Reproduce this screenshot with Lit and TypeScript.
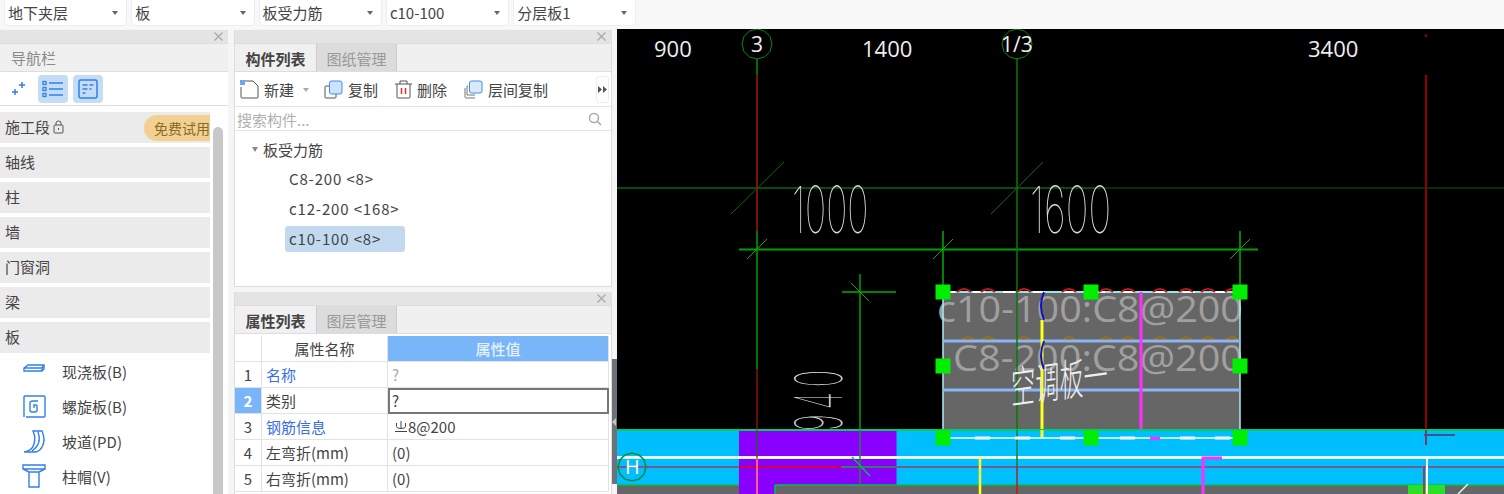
import { LitElement, html, css, svg } from 'lit';
import { customElement } from 'lit/decorators.js';
import { classMap } from 'lit/directives/class-map.js';

const selects = ['地下夹层', '板', '板受力筋', 'c10-100', '分层板1'];
const navRows = ['轴线', '柱', '墙', '门窗洞', '梁', '板'];

const navIcons = {
  slab: svg`<path d="M2 9l4-3h16v4l-2 2H2z M2 9h18v3 M20 9l2-3"/>`,
  spiral: svg`<path d="M2 23V3q0-1 1-1h19q1 0 1 1v19q0 1-1 1H4 M16 7h-5q-3 0-3 2v7q0 2 2 2h3q2 0 2-2v-4q0-1-1-1h-2v3"/>`,
  ramp: svg`<path d="M2 23q8-1 10-8 2-7-1-13h9q4 9 0 16-2 4-6 5z M16 3q3 8-1 14-2 3-5 5"/>`,
  cap: svg`<path d="M1 1h22v4l-6 3v15H7V8L1 5z M1 5h22 M7 8h10"/>`,
};

const subItems = [
  { icon: navIcons.slab, label: '现浇板(B)' },
  { icon: navIcons.spiral, label: '螺旋板(B)' },
  { icon: navIcons.ramp, label: '坡道(PD)' },
  { icon: navIcons.cap, label: '柱帽(V)' },
];

const treeItems = [
  { label: 'C8-200 <8>', selected: false },
  { label: 'c12-200 <168>', selected: false },
  { label: 'c10-100 <8>', selected: true },
];

const propRows = [
  { name: '名称', value: '?', link: true, muted: true },
  { name: '类别', value: '?', active: true },
  { name: '钢筋信息', value: '8@200', link: true, rebar: true },
  { name: '左弯折(mm)', value: '(0)' },
  { name: '右弯折(mm)', value: '(0)' },
];

// regular polygon, the CAD axis bubbles are not true circles
const ring = (cx: number, cy: number, r: number, n = 12) =>
  Array.from({ length: n }, (_, i) => {
    const a = (i * 2 * Math.PI) / n;
    return `${(cx + r * Math.cos(a)).toFixed(1)},${(cy + r * Math.sin(a)).toFixed(1)}`;
  }).join(' ');

const handles = [
  [943, 292], [1091, 292], [1240, 292], [943, 366], [1240, 366], [943, 438], [1091, 438], [1240, 438],
];
const redArcs = [964, 988, 1024, 1069, 1106, 1128, 1160, 1186, 1208, 1232];
const brownArcs = [968, 988, 1024, 1069, 1106, 1128, 1160, 1186, 1208, 1232];
const whiteDashes = [975, 1015, 1060, 1120, 1180, 1215];

const dimTick = (x: number, y: number, r = 10) =>
  svg`<line x1=${x - r} y1=${y + r} x2=${x + r} y2=${y - r} stroke="#00b000" />`;

const close = html`<svg class="close" width="9" height="9" viewBox="0 0 9 9"><path d="M.5 .5l8 8M8.500 .5l-8 8" /></svg>`;

@customElement('app-root')
export class AppRoot extends LitElement {
  static styles = css`
    :host {
      display: block;
      width: 1504px;
      height: 494px;
      overflow: hidden;
      background: #f5f5f5;
      font-family: 'Noto Sans CJK SC', 'Open Sans', sans-serif;
      font-size: 15px;
      color: #444;
    }
    .topbar {
      display: flex;
      gap: 4px;
      height: 29px;
      padding-left: 4px;
      box-sizing: border-box;
      background: #f8f8f8;
    }
    .select {
      width: 123.3px;
      height: 26px;
      padding: 0 8px 0 3px;
      box-sizing: border-box;
      display: flex;
      align-items: center;
      justify-content: space-between;
      background: #fff;
      border: 1px solid #eee;
      border-top: none;
      border-radius: 0 0 4px 4px;
      line-height: 26px;
    }
    .caret {
      width: 0;
      height: 0;
      border: 3px solid transparent;
      border-top: 4px solid #666;
      border-bottom: none;
    }
    .main {
      display: flex;
      height: 465px;
    }
    .nav {
      width: 228px;
      margin-top: 1px;
      background: #fff;
      overflow: hidden;
      flex: none;
    }
    .titlebar {
      height: 14px;
      box-sizing: border-box;
      background: #e4e4e4;
      display: flex;
      justify-content: flex-end;
      align-items: center;
      padding-right: 5px;
      border-bottom: 1px solid #ddd;
    }
    .close {
      fill: none;
      stroke: #a8a8a8;
      stroke-width: 1.3;
    }
    .nav-head {
      height: 27px;
      line-height: 27px;
      padding-left: 11px;
      background: #f0f0f0;
      color: #8a8a8a;
      border-bottom: 1px solid #ddd;
    }
    .nav-tools {
      height: 33px;
      display: flex;
      align-items: center;
      padding-left: 10px;
      border-bottom: 1px solid #ddd;
    }
    .nav-tools svg {
      fill: none;
      stroke: #2f80ed;
      stroke-width: 1.3;
    }
    .tool-on {
      width: 30px;
      height: 28px;
      background: #c4dcf6;
      border-radius: 4px;
      display: flex;
      align-items: center;
      justify-content: center;
      margin-right: 5px;
    }
    .sparkle {
      width: 16px;
      margin-right: 12px;
    }
    .nav-body {
      display: flex;
    }
    .nav-list {
      width: 210px;
      padding-top: 6px;
      display: flex;
      flex-direction: column;
      gap: 4px;
    }
    .nav-row {
      height: 31px;
      box-sizing: border-box;
      padding: 0 0 2px 5px;
      background: #ebebeb;
      display: flex;
      align-items: center;
      flex: none;
    }
    .lock {
      margin-left: 3px;
      fill: none;
      stroke: #555;
    }
    .pill {
      margin: 2px 0 0 auto;
      width: 56px;
      height: 26px;
      line-height: 26px;
      padding-left: 10px;
      background: #f3d08f;
      border-radius: 13px 0 0 13px;
      color: #8a6a2c;
      font-size: 14px;
      white-space: nowrap;
      overflow: hidden;
    }
    .subs {
      margin-top: -3px;
    }
    .sub {
      height: 35px;
      display: flex;
      align-items: center;
      padding-left: 22px;
      gap: 15px;
    }
    .sub svg {
      fill: none;
      stroke: #2f80ed;
      stroke-width: 1.4;
      flex: none;
    }
    .rail {
      margin: 21px 0 0 3px;
      width: 10px;
      height: 400px;
      background: #c8c8c8;
      border-radius: 5px 5px 0 0;
    }
    .middle {
      width: 378px;
      margin: 1px 0 0 6px;
      flex: none;
      display: flex;
      flex-direction: column;
      gap: 5px;
    }
    .panel {
      background: #fff;
      border: solid #ddd;
      border-width: 0 1px 1px;
      box-sizing: border-box;
    }
    .panel.top {
      height: 257px;
    }
    .panel.bottom {
      flex: 1;
      border-bottom: none;
      overflow: hidden;
    }
    .tabs {
      display: flex;
      height: 28px;
      box-sizing: border-box;
      background: #f0f0f0;
      border-bottom: 1px solid #ddd;
    }
    .tab {
      width: 81px;
      line-height: 29px;
      text-align: center;
      background: #dcdcdc;
      color: #999;
      border-left: 1px solid #ccc;
      border-right: 1px solid #ccc;
      box-sizing: border-box;
    }
    .tab.on {
      background: #f0f0f0;
      color: #444;
      font-weight: 700;
      border: none;
    }
    .toolbar {
      height: 35px;
      box-sizing: border-box;
      display: flex;
      align-items: center;
      padding: 1px 0 0 5px;
      border-bottom: 1px solid #e2e2e2;
    }
    .action {
      display: flex;
      align-items: center;
      gap: 5px;
      margin-right: 17px;
    }
    .action svg {
      flex: none;
    }
    .mini-caret {
      margin: 0 -2px 0 4px;
      width: 0;
      height: 0;
      border: 3px solid transparent;
      border-top: 4px solid #aaa;
      border-bottom: none;
    }
    .more {
      margin-left: auto;
      margin-right: 2px;
      width: 13px;
      height: 27px;
      border: 1px solid #eee;
      border-radius: 3px;
      box-sizing: border-box;
      display: flex;
      align-items: center;
      justify-content: center;
      color: #555;
    }
    .more svg {
      fill: #555;
    }
    .search {
      height: 24px;
      box-sizing: border-box;
      display: flex;
      align-items: center;
      justify-content: space-between;
      padding: 1px 9px 0 2px;
      color: #b0b0b0;
      border-bottom: 1px solid #e2e2e2;
    }
    .search svg {
      fill: none;
      stroke: #aaa;
      stroke-width: 1.5;
    }
    .tree {
      padding-top: 5px;
    }
    .tree-root {
      height: 26px;
      margin-bottom: 1px;
      display: flex;
      align-items: center;
      padding-left: 17px;
      gap: 5px;
    }
    .tree-caret {
      width: 0;
      height: 0;
      border: 3.5px solid transparent;
      border-top: 5px solid #888;
      border-bottom: none;
    }
    .tree-item {
      width: 120px;
      height: 26px;
      line-height: 26px;
      margin: 4px 0 0 50px;
      padding-left: 4px;
      box-sizing: border-box;
      border-radius: 3px;
      letter-spacing: 0.85px;
      white-space: nowrap;
    }
    .tree-item.sel {
      background: #c3d9f0;
    }
    .table {
      display: grid;
      grid-template-columns: 27px 126px 221px;
      grid-auto-rows: 26px;
      margin-top: 2px;
      line-height: 26px;
    }
    .cell {
      border: solid #e2e2e2;
      border-width: 0 1px 1px 0;
      box-sizing: border-box;
      padding-left: 4px;
      white-space: nowrap;
    }
    .cell.idx {
      text-align: center;
      padding-left: 0;
    }
    .cell.idx.on {
      background: #79b6f9;
      color: #fff;
      font-weight: 700;
    }
    .cell.head {
      text-align: center;
      padding-left: 0;
    }
    .cell.head.val {
      background: #79b6f9;
      color: #e6f1fd;
      font-weight: 500;
    }
    .link {
      color: #3a6ee8;
    }
    .muted {
      color: #aaa;
    }
    .editing {
      border: 2px solid #777;
      line-height: 22px;
      padding-left: 2px;
    }
    .rebar {
      fill: none;
      stroke: #444;
      margin: 0 1px 5px 3px;
      vertical-align: middle;
    }
    .splitter {
      width: 5px;
      height: 125px;
      margin-top: 330px;
      background: #6d7278;
      flex: none;
      display: flex;
      align-items: center;
    }
    .splitter svg {
      fill: #c4c4c4;
    }
    .canvas {
      display: block;
      flex: none;
      background: #000;
    }
    .canvas text {
      font-family: 'Open Sans', 'Liberation Sans', sans-serif;
    }
    .canvas .thin {
      font-family: 'Inter', 'Liberation Sans', sans-serif;
      font-weight: 100;
    }
    .canvas .cjk {
      font-family: 'Noto Sans CJK SC', sans-serif;
      font-weight: 300;
    }
  `;

  private renderCanvas() {
    return html`<svg class="canvas" width="887" height="465" viewBox="617 29 887 465" fill="none">
      <!-- grid and dimensions on black -->
      <line x1="617" y1="188" x2="1100" y2="188" stroke="#0a660a" stroke-width="1.5" />
      <line x1="1100" y1="188" x2="1504" y2="188" stroke="#063f06" stroke-width="1.5" />
      <line x1="757" y1="59" x2="757" y2="75" stroke="#0a8a0a" stroke-width="1.5" />
      <line x1="757" y1="75" x2="757" y2="231" stroke="#a01a00" stroke-width="1.5" />
      <line x1="757" y1="231" x2="757" y2="369" stroke="#00a000" stroke-width="1.5" />
      <line x1="757" y1="369" x2="757" y2="430" stroke="#8a1000" stroke-width="1.5" />
      <line x1="1426" y1="34" x2="1426" y2="37" stroke="#8a0000" stroke-width="2" />
      <line x1="1426" y1="75" x2="1426" y2="430" stroke="#900000" stroke-width="2" />
      <polygon points=${ring(757, 44, 15)} stroke="#0a8a0a" />
      <polygon points=${ring(1017, 44, 15)} stroke="#0a8a0a" />
      <line x1="731" y1="214" x2="784" y2="162" stroke="#0a660a" />
      <line x1="991" y1="214" x2="1043" y2="162" stroke="#0a660a" />

      <g fill="#eee" font-size="22">
        <text x="654" y="57">900</text>
        <text x="862" y="57">1400</text>
        <text x="1308" y="57">3400</text>
        <text x="751" y="52" font-size="21">3</text>
        <text x="1001" y="52" font-size="21">1/3</text>
      </g>

      <g fill="#ddd" font-size="65">
        <text class="thin" transform="translate(792 233) scale(.55 1)">1000</text>
        <text class="thin" transform="translate(1030 233) scale(.59 1)">1600</text>
        <text class="thin" transform="translate(842 431) rotate(-90) scale(.45 1)" letter-spacing="11">940</text>
      </g>

      <line x1="739" y1="249.500" x2="1258" y2="249.500" stroke="#00a000" stroke-width="2" />
      <line x1="943" y1="231" x2="943" y2="292" stroke="#00b000" stroke-width="1.5" />
      <line x1="1240" y1="231" x2="1240" y2="292" stroke="#00b000" stroke-width="1.5" />
      ${dimTick(757, 249)} ${dimTick(943, 249)} ${dimTick(1240, 249)}
      <line x1="842" y1="292" x2="896" y2="292" stroke="#00b000" stroke-width="1.5" />
      <line x1="860" y1="274" x2="860" y2="485" stroke="#00a000" stroke-width="1.5" />
      <line x1="851" y1="283" x2="869" y2="301" stroke="#00b000" />

      <!-- slab in plan -->
      <rect x="943" y="292" width="297" height="138" fill="#666" />
      <text x="937" y="322" font-size="36" fill="#a0a0a0" textLength="306" lengthAdjust="spacingAndGlyphs">c10-100:C8@200</text>
      <text x="953" y="371" font-size="36" fill="#a0a0a0" textLength="290" lengthAdjust="spacingAndGlyphs">C8-200:C8@200</text>
      <line x1="943" y1="292" x2="1240" y2="292" stroke="#8fe8f0" stroke-width="2" />
      <line x1="943" y1="292" x2="1240" y2="292" stroke="#fff" stroke-width="2" stroke-dasharray="12 18" />
      <line x1="943" y1="292" x2="943" y2="430" stroke="#a8f0f4" stroke-width="1.5" />
      <line x1="1240" y1="292" x2="1240" y2="430" stroke="#a8f0f4" stroke-width="1.5" />
      ${redArcs.map((x) => svg`<path d="M${x - 7} 292q7-6 14 0" stroke="#c01818" stroke-width="2" />`)}
      ${brownArcs.map((x) => svg`<path d="M${x - 7} 341q7-8 14 0" stroke="#9a7010" stroke-width="2" />`)}
      <line x1="943" y1="341" x2="1240" y2="341" stroke="#8ab4f8" stroke-width="3" />
      <line x1="943" y1="390" x2="1240" y2="390" stroke="#8ab4f8" stroke-width="3" />
      <line x1="1042" y1="320" x2="1042" y2="438" stroke="#ffff20" stroke-width="3" />
      <line x1="1141" y1="292" x2="1141" y2="438" stroke="#ff30ff" stroke-width="3" />
      <path d="M1044 292q-6 14 0 28 M1044 341q-6 15 0 28" stroke="#1010c0" stroke-width="2" />
      <line x1="1017" y1="58" x2="1017" y2="430" stroke="#0a7a0a" stroke-width="1.5" />
      <text class="cjk" transform="translate(1011 404) skewY(-8) scale(.55 1)" font-size="44" fill="#eee">空调板一</text>

      <!-- beam band along the bottom -->
      <rect x="617" y="430" width="887" height="55" fill="#00bfff" />
      <rect x="739" y="430" width="157.500" height="55" fill="#8a00ff" />
      <rect x="617" y="485" width="887" height="9" fill="#666" />
      <rect x="739" y="485" width="36" height="9" fill="#8a00ff" />
      <line x1="617" y1="430" x2="1504" y2="430" stroke="#00d060" stroke-width="2" />
      <line x1="617" y1="485" x2="739" y2="485" stroke="#00c050" stroke-width="1.5" />
      <line x1="775" y1="485" x2="1504" y2="485" stroke="#00c050" stroke-width="1.5" />
      <line x1="775" y1="485" x2="775" y2="494" stroke="#00c050" stroke-width="1.5" />
      <line x1="617" y1="457.500" x2="1504" y2="457.500" stroke="#d8f8ff" stroke-width="3" />
      <line x1="617" y1="457.500" x2="1504" y2="457.500" stroke="#fff" />
      <line x1="617" y1="467" x2="1504" y2="467" stroke="#7a5a8a" stroke-width="2" />
      <line x1="739" y1="467" x2="841" y2="467" stroke="#d0003c" stroke-width="2" />
      <line x1="841" y1="467" x2="896" y2="467" stroke="#3c7a60" stroke-width="2" />
      <line x1="757" y1="430" x2="757" y2="457" stroke="#2a5a2a" stroke-width="1.5" />
      <line x1="757" y1="457" x2="757" y2="494" stroke="#ff5a8a" stroke-width="2" />
      <line x1="860" y1="430" x2="860" y2="485" stroke="#1f8a3a" stroke-width="1.5" />
      <line x1="852" y1="457" x2="870" y2="476" stroke="#00c040" stroke-width="1.5" />
      <line x1="1017" y1="430" x2="1017" y2="467" stroke="#0a7a3a" stroke-width="1.5" />
      <line x1="1017" y1="467" x2="1017" y2="494" stroke="#b02020" stroke-width="1.5" />
      <line x1="980" y1="457" x2="980" y2="494" stroke="#ffff20" stroke-width="2.500" />
      <path d="M1222 458h-19v36" stroke="#ff30ff" stroke-width="3" />
      <line x1="1042" y1="430" x2="1042" y2="438" stroke="#ffff20" stroke-width="3" />
      <line x1="1426" y1="430" x2="1426" y2="445" stroke="#7a3a60" stroke-width="2" />
      <line x1="1424" y1="435" x2="1455" y2="435" stroke="#3a5a80" stroke-width="2" />

      <rect x="1408" y="485" width="37" height="9" fill="#2ade2a" />
      <line x1="1424" y1="467" x2="1424" y2="494" stroke="#a04040" stroke-width="2" />
      <line x1="1427" y1="457" x2="1427" y2="494" stroke="#fff" stroke-width="2" />
      <line x1="1458" y1="494" x2="1468" y2="484" stroke="#eee" stroke-width="1.5" />

      <line x1="950" y1="438" x2="1233" y2="438" stroke="#bff4ff" stroke-width="2" />
      ${whiteDashes.map((x) => svg`<line x1=${x} y1="438" x2=${x + 15} y2="438" stroke="#fff" stroke-width="3" />`)}
      <line x1="1150" y1="438.500" x2="1160" y2="438.500" stroke="#ff30ff" stroke-width="3" />
      ${handles.map(([x, y]) => svg`<rect x=${x - 7.5} y=${y - 7.5} width="15" height="15" fill="#00ee00" />`)}

      <polygon points=${ring(632, 467, 14)} stroke="#0a8a3a" stroke-width="1.5" />
      <text x="625" y="474" font-size="20" fill="#fff">H</text>
    </svg>`;
  }

  private renderPropValue(r: (typeof propRows)[number]) {
    if (r.active) return html`<div class="cell editing">${r.value}</div>`;
    return html`<div class=${classMap({ cell: true, muted: !!r.muted })}>
      ${r.rebar
        ? html`<svg class="rebar" width="12" height="11" viewBox="0 0 12 11"><path d="M1.500 2v3.500q0 2 4.500 2t4.500-2V2M6 0v8M0 10.500h12"/></svg>`
        : ''}${r.value}
    </div>`;
  }

  render() {
    return html`
      <div class="topbar">
        ${selects.map((s) => html`<div class="select"><span>${s}</span><span class="caret"></span></div>`)}
      </div>
      <div class="main">
        <div class="nav">
          <div class="titlebar">${close}</div>
          <div class="nav-head">导航栏</div>
          <div class="nav-tools">
            <svg class="sparkle" width="16" height="16" viewBox="0 0 16 16">
              <path d="M9 4h6M12 1v6M2 11h6M5 8v6" stroke-width="1.500" />
            </svg>
            <div class="tool-on">
              <svg width="22" height="18" viewBox="0 0 22 18">
                <rect x="1" y="1.500" width="3" height="3" /><rect x="1" y="7.500" width="3" height="3" /><rect x="1" y="13.500" width="3" height="3" />
                <path d="M7 3h14M7 9h14M7 15h14" stroke-width="1.500" />
              </svg>
            </div>
            <div class="tool-on">
              <svg width="20" height="20" viewBox="0 0 20 20">
                <rect x="1" y="1" width="18" height="18" rx="2" stroke-width="1.500" />
                <path d="M4.500 6h5M11.500 6h4M4.500 10h5M11.500 10h2M4.500 14h3" />
              </svg>
            </div>
          </div>
          <div class="nav-body">
            <div class="nav-list">
              <div class="nav-row">
                施工段
                <svg class="lock" width="11" height="14" viewBox="0 0 11 14">
                  <rect x="1" y="5" width="9" height="8" rx="1" /><path d="M3 5V3q0-2 2.500-2T8 3v2M5.500 8v2" />
                </svg>
                <span class="pill">免费试用</span>
              </div>
              ${navRows.map((r) => html`<div class="nav-row">${r}</div>`)}
              <div class="subs">
                ${subItems.map(
                  (s) => html`<div class="sub">
                    <svg width="25" height="25" viewBox="0 0 25 25">${s.icon}</svg>
                    <span>${s.label}</span>
                  </div>`
                )}
              </div>
            </div>
            <div class="rail"></div>
          </div>
        </div>

        <div class="middle">
          <div class="panel top">
            <div class="titlebar">${close}</div>
            <div class="tabs">
              <div class="tab on">构件列表</div>
              <div class="tab">图纸管理</div>
            </div>
            <div class="toolbar">
              <div class="action">
                <svg width="19" height="19" viewBox="0 0 19 19" fill="none">
                  <path d="M1 7v10q0 1 1 1h15q1 0 1-1V6l-5-5H5" stroke="#555" />
                  <rect x="0" y="0" width="5" height="5" fill="#6ea6ef" />
                </svg>
                新建<span class="mini-caret"></span>
              </div>
              <div class="action">
                <svg width="19" height="19" viewBox="0 0 19 19" fill="none">
                  <path d="M5 6H2q-1 0-1 1v10q0 1 1 1h9q1 0 1-1v-3" stroke="#555" />
                  <rect x="5.500" y="1" width="12.500" height="13" rx="2" fill="#cfe2fb" stroke="#3f8cf0" />
                </svg>
                复制
              </div>
              <div class="action">
                <svg width="17" height="19" viewBox="0 0 17 19" fill="none">
                  <path d="M0 4h17M5 4V1h7v3M2 4v13q0 1 1 1h11q1 0 1-1V4" stroke="#555" />
                  <path d="M6.500 8v6M10.500 8v6" stroke="#e03030" stroke-width="1.500" />
                </svg>
                删除
              </div>
              <div class="action">
                <svg width="19" height="19" viewBox="0 0 19 19" fill="none">
                  <path d="M4 6H3v9h8M1 8v9q0 1 1 1h9" stroke="#777" />
                  <rect x="5.500" y="1" width="12.500" height="12" rx="2" fill="#dbe9fc" stroke="#3f8cf0" />
                </svg>
                层间复制
              </div>
              <div class="more">
                <svg width="9" height="7" viewBox="0 0 9 7"><path d="M0 0l4 3.500L0 7zM5 0l4 3.500L5 7z" /></svg>
              </div>
            </div>
            <div class="search">
              搜索构件...
              <svg width="14" height="14" viewBox="0 0 14 14"><circle cx="6" cy="6" r="4.500" /><path d="M9.500 9.500L13 13" /></svg>
            </div>
            <div class="tree">
              <div class="tree-root"><span class="tree-caret"></span>板受力筋</div>
              ${treeItems.map(
                (t) => html`<div class=${classMap({ 'tree-item': true, sel: t.selected })}>${t.label}</div>`
              )}
            </div>
          </div>

          <div class="panel bottom">
            <div class="titlebar">${close}</div>
            <div class="tabs">
              <div class="tab on">属性列表</div>
              <div class="tab">图层管理</div>
            </div>
            <div class="table">
              <div class="cell"></div>
              <div class="cell head">属性名称</div>
              <div class="cell head val">属性值</div>
              ${propRows.map(
                (r, i) => html`
                  <div class=${classMap({ cell: true, idx: true, on: !!r.active })}>${i + 1}</div>
                  <div class=${classMap({ cell: true, link: !!r.link })}>${r.name}</div>
                  ${this.renderPropValue(r)}
                `
              )}
            </div>
          </div>
        </div>

        <div class="splitter">
          <svg width="5" height="10" viewBox="0 0 5 10"><path d="M4 1v8L0 5z" /></svg>
        </div>
        ${this.renderCanvas()}
      </div>
    `;
  }
}
